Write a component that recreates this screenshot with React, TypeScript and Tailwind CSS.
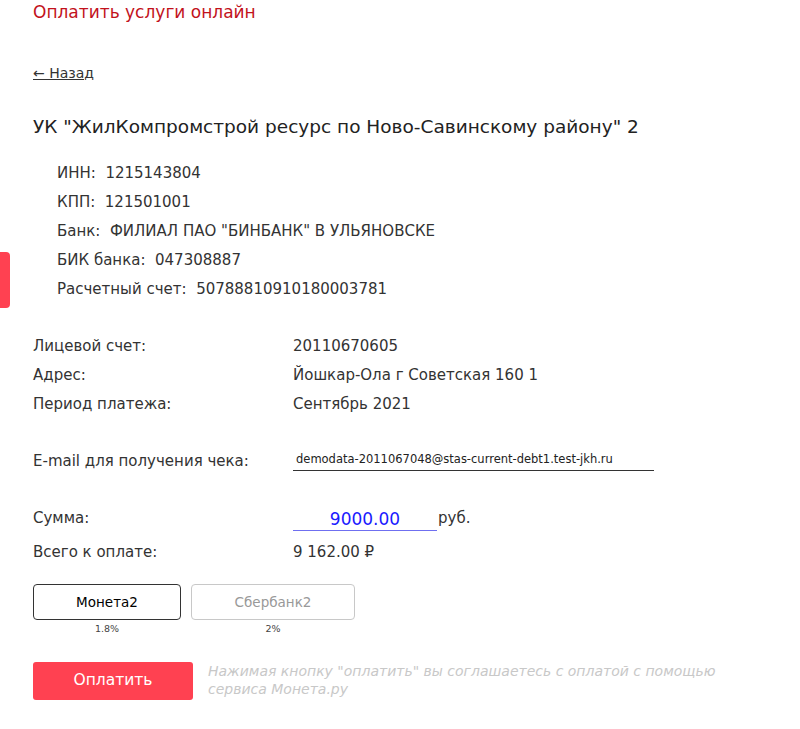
import React, { useState } from 'react';

const details = [
    ['ИНН:', '1215143804'],
    ['КПП:', '121501001'],
    ['Банк:', 'ФИЛИАЛ ПАО "БИНБАНК" В УЛЬЯНОВСКЕ'],
    ['БИК банка:', '047308887'],
    ['Расчетный счет:', '50788810910180003781'],
];

const rows = [
    ['Лицевой счет:', '20110670605'],
    ['Адрес:', 'Йошкар-Ола г Советская 160 1'],
    ['Период платежа:', 'Сентябрь 2021'],
];

const App = () => {
    const [method, setMethod] = useState('moneta');
    const [sum, setSum] = useState('9000.00');
    const [email, setEmail] = useState('demodata-2011067048@stas-current-debt1.test-jkh.ru');

    return (
        <div className="min-h-[729px] bg-white text-[#333] font-['DejaVu_Sans',sans-serif]">
            <div className="fixed left-0 top-[252px] w-[10px] h-[56px] bg-[#ff4151] rounded-r-[4px]"></div>

            <div className="flex flex-col px-[33px]">
                <h1 className="text-[17px] leading-[24px] text-[#c2121c]">Оплатить услуги онлайн</h1>

                <a href="#" className="mt-[39px] self-start text-[14px] leading-[20px] text-[#333] underline">← Назад</a>

                <h2 className="mt-[32px] text-[18.5px] leading-[24px] text-[#222]">
                    УК "ЖилКомпромстрой ресурс по Ново-Савинскому району" 2
                </h2>

                <div className="mt-[20px] pl-[24px] flex flex-col">
                    {details.map(([k, v]) => (
                        <div key={k} className="h-[29px] leading-[29px] text-[15px]">
                            {k}&nbsp; {v}
                        </div>
                    ))}
                </div>

                <div className="mt-[28px] flex flex-col">
                    {rows.map(([k, v]) => (
                        <div key={k} className="flex h-[29px] leading-[29px] text-[15px]">
                            <span className="w-[260px] shrink-0">{k}</span>
                            <span>{v}</span>
                        </div>
                    ))}
                </div>

                <div className="mt-[28px] flex items-end h-[29px] text-[15px]">
                    <span className="w-[260px] shrink-0 leading-[29px]">E-mail для получения чека:</span>
                    <input
                        value={email}
                        onChange={(e) => setEmail(e.target.value)}
                        className="w-[361px] h-[24px] mb-[5px] pl-[3px] border-b border-[#333] text-[11.5px] text-[#222] outline-none"
                    />
                </div>

                <div className="mt-[28px] flex items-center h-[29px] text-[15px]">
                    <span className="w-[260px] shrink-0 leading-[29px]">Сумма:</span>
                    <input
                        value={sum}
                        onChange={(e) => setSum(e.target.value)}
                        className="w-[144px] h-[24px] mt-[1px] border-b border-[#6f6ff0] text-[17px] leading-[22px] text-[#1a1aff] text-center outline-none"
                    />
                    <span className="ml-[1px]">руб.</span>
                </div>

                <div className="mt-[5px] flex h-[29px] leading-[29px] text-[15px]">
                    <span className="w-[260px] shrink-0">Всего к оплате:</span>
                    <span>9 162.00 ₽</span>
                </div>

                <div className="mt-[17px] flex gap-[10px]">
                    <div className="flex flex-col items-center">
                        <button
                            onClick={() => setMethod('moneta')}
                            className={`w-[148px] h-[36px] rounded-[4px] border text-[13.5px] ${method === 'moneta' ? 'border-[#333] text-black' : 'border-[#c8c8c8] text-[#999]'}`}
                        >
                            Монета2
                        </button>
                        <span className="mt-[3px] text-[9.5px] leading-[12px] text-[#444]">1.8%</span>
                    </div>
                    <div className="flex flex-col items-center">
                        <button
                            onClick={() => setMethod('sber')}
                            className={`w-[164px] h-[36px] rounded-[4px] border text-[13.5px] ${method === 'sber' ? 'border-[#333] text-black' : 'border-[#c8c8c8] text-[#999]'}`}
                        >
                            Сбербанк2
                        </button>
                        <span className="mt-[3px] text-[9.5px] leading-[12px] text-[#444]">2%</span>
                    </div>
                </div>

                <div className="mt-[27px] flex items-start gap-[15px]">
                    <button className="w-[160px] h-[38px] shrink-0 rounded-[3px] bg-[#ff4151] text-white text-[15.5px]">
                        Оплатить
                    </button>
                    <p className="w-[515px] text-[14px] leading-[18px] italic text-[#c8c8c8]">
                        Нажимая кнопку "оплатить" вы соглашаетесь с оплатой с помощью сервиса Монета.ру
                    </p>
                </div>
            </div>
        </div>
    );
};

export default App;
